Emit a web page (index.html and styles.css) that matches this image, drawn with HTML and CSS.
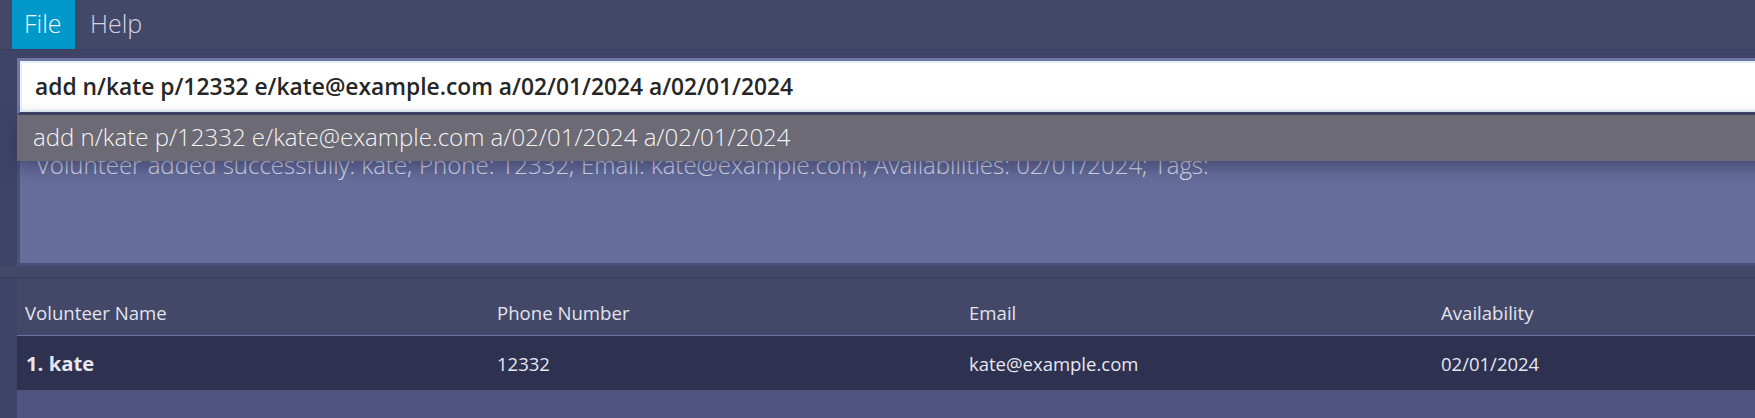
FILE: index.html
```html
<!DOCTYPE html>
<html>
<head>
<meta charset="utf-8">
<link rel="stylesheet" href="styles.css">
</head>
<body>
<div class="app">
  <div class="menubar">
    <div class="menu-item active">File</div>
    <div class="menu-item">Help</div>
  </div>
  <div class="top">
    <div class="cmd-area">
      <div class="cmd-box">
        <div class="cmd-input">add n/kate p/12332 e/kate@example.com a/02/01/2024 a/02/01/2024</div>
      </div>
      <div class="suggest">add n/kate p/12332 e/kate@example.com a/02/01/2024 a/02/01/2024</div>
    </div>
    <div class="result">
      <div class="result-text">Volunteer added successfully: kate; Phone: 12332; Email: kate@example.com; Availabilities: 02/01/2024; Tags:</div>
    </div>
  </div>
  <div class="divider"></div>
  <div class="bottom">
    <div class="list">
      <div class="thead">
        <div class="cell">Volunteer Name</div>
        <div class="cell">Phone Number</div>
        <div class="cell">Email</div>
        <div class="cell">Availability</div>
      </div>
      <div class="trow">
        <div class="cell name">1. kate</div>
        <div class="cell">12332</div>
        <div class="cell">kate@example.com</div>
        <div class="cell">02/01/2024</div>
      </div>
      <div class="empty"></div>
    </div>
  </div>
</div>
</body>
</html>
```

FILE: styles.css
```css
html, body {
  margin: 0;
  padding: 0;
  width: 1755px;
  height: 418px;
  overflow: hidden;
  background: #3f4466;
  font-family: "Open Sans", "Noto Sans", sans-serif;
}
.app {
  display: flex;
  flex-direction: column;
  width: 1755px;
  height: 418px;
}
.menubar {
  height: 50px;
  background: #434869;
  border-bottom: 1px solid #3a3e5d;
  display: flex;
  padding-left: 12px;
  box-sizing: border-box;
}
.menu-item {
  height: 49px;
  padding: 0 13px 4px 15px;
  display: flex;
  align-items: center;
  font-size: 25px;
  font-weight: 300;
  color: #d2d4e0;
  box-sizing: border-box;
}
.menu-item.active {
  background: #0098c9;
  color: #eef6fa;
  width: 63px;
  padding-left: 12px;
}
.top {
  padding: 8px 0 0 17px;
  height: 216px;
  box-sizing: border-box;
}
.cmd-area {
  position: relative;
  width: 1760px;
}
.cmd-box {
  height: 57px;
  box-sizing: border-box;
  border-top: 3px solid #6f76a4;
  border-left: 3px solid #6f76a4;
  border-bottom: 3px solid #3e4263;
  background: #fff;
}
.cmd-input {
  height: 100%;
  box-sizing: border-box;
  box-shadow: inset 0 0 0 2px #e4f2f9;
  border-radius: 2px;
  padding-left: 15px;
  display: flex;
  align-items: center;
  font-size: 22.8px;
  font-weight: 600;
  color: #262626;
  white-space: nowrap;
}
.suggest {
  position: absolute;
  left: 0;
  top: 57px;
  right: 0;
  height: 46px;
  background: #6c6a75;
  padding: 0 0 3px 16px;
  box-sizing: border-box;
  display: flex;
  align-items: center;
  font-size: 24px;
  font-weight: 300;
  color: #f4f4f6;
  white-space: nowrap;
  box-shadow: 0 6px 18px rgba(40, 44, 80, 0.55);
  z-index: 2;
}
.result {
  margin-top: 2px;
  width: 1760px;
  height: 149px;
  box-sizing: border-box;
  border: 3px solid #4b5078;
  border-right: none;
  background: #676e9c;
  padding: 29px 0 0 16px;
}
.result-text {
  font-size: 24px;
  line-height: 32px;
  font-weight: 300;
  color: #e2e4f0;
  white-space: nowrap;
}
.divider {
  height: 11px;
  background: #434869;
  border-bottom: 1px solid #393d5b;
}
.bottom {
  flex: 1;
  padding-left: 17px;
  display: flex;
}
.list {
  flex: 1;
  background: #434869;
  display: flex;
  flex-direction: column;
}
.thead, .trow {
  display: grid;
  grid-template-columns: 472px 472px 472px 472px;
}
.thead {
  height: 58px;
  align-items: end;
  padding-bottom: 10px;
  box-sizing: border-box;
  border-bottom: 1px solid #6b72a2;
}
.thead .cell {
  padding-left: 8px;
  font-size: 18.6px;
  color: #e2e3ec;
}
.trow {
  height: 54px;
  background: #2e3150;
  align-items: center;
}
.trow .cell {
  padding-left: 8px;
  font-size: 18.5px;
  color: #e6e7ef;
}
.trow .cell.name {
  padding-left: 9px;
  font-size: 20.3px;
  font-weight: 700;
}
.empty {
  flex: 1;
  background: #50557f;
}
```
